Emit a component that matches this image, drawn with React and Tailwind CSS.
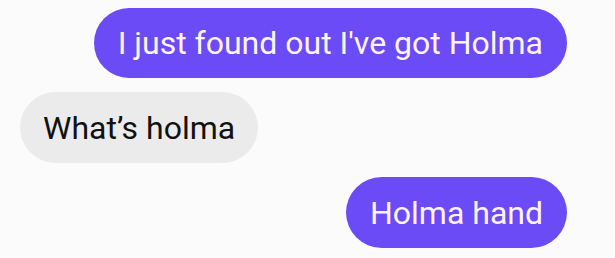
export default function App() {
  return (
    <div className="w-[615px] h-[258px] bg-[#fbfbfb] overflow-hidden font-['Roboto',sans-serif]">
      <div className="flex flex-col gap-[14px] pt-[8px] pl-[20px] pr-[48px]">
        <div className="flex justify-end">
          <div className="h-[70px] flex items-center rounded-full bg-[#6b4bf5] px-[24px] text-[32px] text-[#fdf3fb] leading-none">
            I just found out I've got Holma
          </div>
        </div>
        <div className="flex justify-start">
          <div className="h-[71px] flex items-center rounded-full bg-[#ebebeb] px-[23px] text-[32px] text-[#111111] leading-none">
            What’s holma
          </div>
        </div>
        <div className="flex justify-end">
          <div className="h-[71px] flex items-center rounded-full bg-[#6b4bf5] px-[24px] text-[32px] text-[#fdf3fb] leading-none">
            Holma hand
          </div>
        </div>
      </div>
    </div>
  )
}
